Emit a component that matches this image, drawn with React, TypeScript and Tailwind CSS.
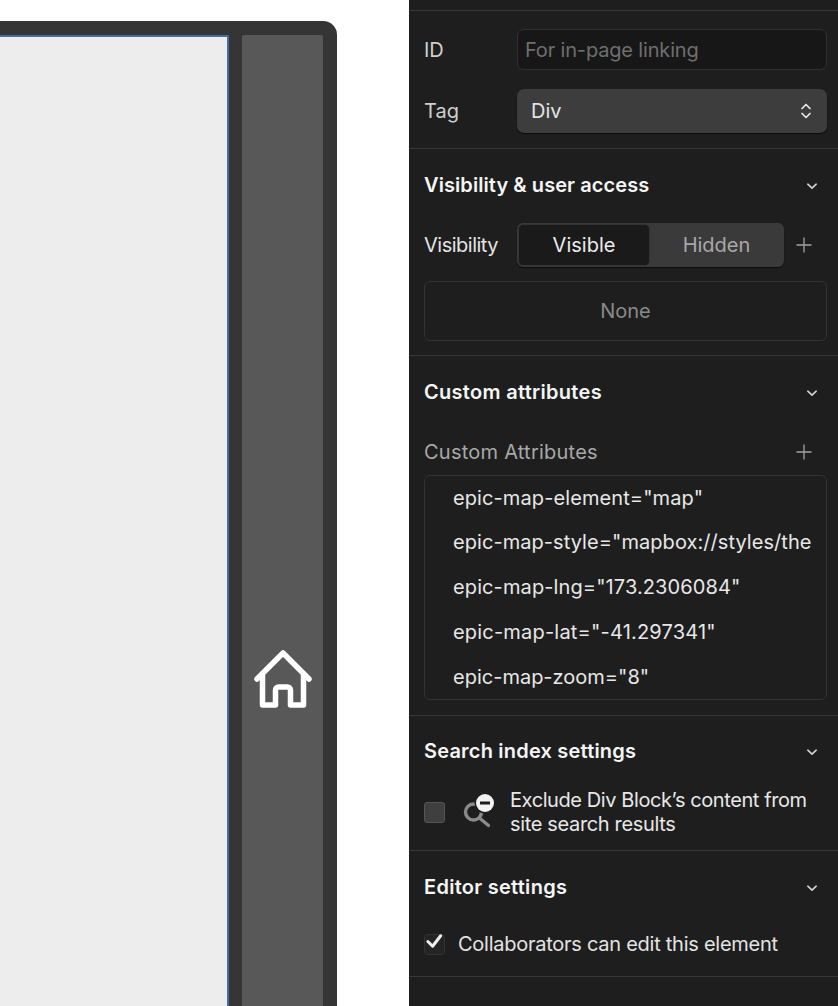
import React from "react";

const Chevron = () => (
  <svg className="translate-y-px" width="14" height="14" viewBox="0 0 14 14" fill="none" stroke="#d4d4d4" strokeWidth="1.6" strokeLinecap="round" strokeLinejoin="round">
    <path d="M2.8 5.2 7 9.2l4.2-4" />
  </svg>
);

const Plus = () => (
  <svg width="16" height="16" viewBox="0 0 16 16" fill="none" stroke="#a3a3a3" strokeWidth="1.3">
    <path d="M8 .5v15M.5 8h15" />
  </svg>
);

function Heading({ title, tracking }: { title: string; tracking: string }) {
  return (
    <div className="flex h-[20px] items-center justify-between pr-[8px]">
      <span className={`text-[20px] leading-[24px] font-semibold text-[#f5f5f5] ${tracking}`}>{title}</span>
      <Chevron />
    </div>
  );
}

export default function App() {
  const attrs = [
    { text: 'epic-map-element="map"', tracking: "tracking-[0.1px]" },
    { text: 'epic-map-style="mapbox://styles/the', tracking: "tracking-[0.06px]" },
    { text: 'epic-map-lng="173.2306084"', tracking: "tracking-[0.11px]" },
    { text: 'epic-map-lat="-41.297341"', tracking: "tracking-[0.2px]" },
    { text: 'epic-map-zoom="8"', tracking: "tracking-[0px]" },
  ];
  return (
    <div className="flex h-[1006px] w-[838px] overflow-hidden bg-white font-['Inter',sans-serif]">
      <div className="w-[409px] shrink-0 pt-[21px]">
        <div className="flex h-[985px] w-[337px] rounded-tr-[14px] bg-[#353535] pt-[14px]">
          <div className="w-[229px] rounded-tr-[2px] border-t-2 border-r-2 border-[#4a6aa3] bg-[#ededed]" />
          <div className="ml-[13px] flex w-[81px] justify-center rounded-t-[2px] bg-[#585858] pt-[614px]">
            <svg className="h-[62px] w-[62px]" viewBox="0 0 62 62" fill="none" stroke="#fff" strokeWidth="5.5" strokeLinecap="round" strokeLinejoin="round">
              <path d="M5 30 31 4l26 26" />
              <path d="M10.5 25v31h13V41a3 3 0 0 1 3-3h9a3 3 0 0 1 3 3v15h13V25" />
            </svg>
          </div>
        </div>
      </div>

      <div className="w-[429px] shrink-0 bg-[#1e1e1e] text-[20px] leading-[24px]">
        <div className="h-[11px] border-b border-[#373737]" />

        <div className="h-[138px] border-b border-[#373737] pl-[15px] pr-[11px] pt-[18px]">
          <div className="flex h-[41px] items-center">
            <span className="w-[93px] shrink-0 text-[#cfcfcf]">ID</span>
            <div className="flex h-[41px] w-[310px] shrink-0 items-center rounded-[7px] border border-[#303030] bg-[#171717] px-[7px] tracking-[-0.16px] text-[#6f6f6f]">For in-page linking</div>
          </div>
          <div className="mt-[19px] flex h-[44px] items-center">
            <span className="w-[93px] shrink-0 text-[#cfcfcf]">Tag</span>
            <div className="flex h-[44px] w-[310px] shrink-0 items-center justify-between rounded-[7px] bg-[#3d3d3d] pl-[14px] pr-[15px] text-[#e4e4e4] shadow-[0_1px_1px_#0c0c0c]">
              <span>Div</span>
              <svg width="12" height="18" viewBox="0 0 12 18" fill="none" stroke="#e8e8e8" strokeWidth="1.7" strokeLinecap="round" strokeLinejoin="round">
                <path d="M2 6.5 6 2.5l4 4M2 11.5l4 4 4-4" />
              </svg>
            </div>
          </div>
        </div>

        <div className="h-[207px] border-b border-[#373737] pl-[15px] pr-[11px] pt-[26px]">
          <Heading title="Visibility & user access" tracking="tracking-[0.08px]" />
          <div className="mt-[28px] flex h-[44px] items-center">
            <span className="w-[93px] shrink-0 tracking-[-0.5px] text-[#e4e4e4]">Visibility</span>
            <div className="flex h-[44px] w-[267px] shrink-0 rounded-[6px] bg-[#3a3a3a] p-px shadow-[0_1px_1px_#0c0c0c]">
              <div className="flex w-[132px] items-center justify-center rounded-[5px] border border-[#333] bg-[#1a1a1a] text-[#ececec]">Visible</div>
              <div className="flex flex-1 items-center justify-center text-[#a8a8a8]">Hidden</div>
            </div>
            <span className="ml-[12px]"><Plus /></span>
          </div>
          <div className="mt-[14px] flex h-[60px] w-[403px] items-center justify-center rounded-[6px] border border-[#333] text-[#8a8a8a]">None</div>
        </div>

        <div className="h-[360px] border-b border-[#373737] pl-[15px] pr-[11px] pt-[26px]">
          <Heading title="Custom attributes" tracking="tracking-[0.3px]" />
          <div className="mt-[38px] flex h-[24px] items-center justify-between pr-[15px]">
            <span className="tracking-[0.24px] text-[#a8a8a8]">Custom Attributes</span>
            <Plus />
          </div>
          <div className="mt-[11px] h-[225px] w-[403px] overflow-hidden rounded-[6px] border border-[#333] pl-[28px]">
            {attrs.map((a) => (
              <div key={a.text} className={`flex h-[45px] w-[358px] items-center whitespace-nowrap text-[#e8e8e8] first:h-[43px] ${a.tracking}`}>{a.text}</div>
            ))}
          </div>
        </div>

        <div className="h-[135px] border-b border-[#373737] pl-[15px] pr-[11px] pt-[25px]">
          <Heading title="Search index settings" tracking="tracking-[0.2px]" />
          <div className="mt-[27px] flex items-center">
            <div className="h-[21px] w-[21px] shrink-0 rounded-[3px] border border-[#555] bg-[#3f3f3f]" />
            <svg className="ml-[18px] shrink-0" width="32" height="36" viewBox="0 0 32 36" fill="none">
              <circle cx="10.5" cy="18" r="8" stroke="#8a8a8a" strokeWidth="3.4" />
              <path d="m17 24.5 8.5 7" stroke="#8a8a8a" strokeWidth="3.4" strokeLinecap="round" />
              <circle cx="22" cy="9" r="10.5" fill="#1e1e1e" />
              <circle cx="22" cy="9" r="9" fill="#f2f2f2" />
              <path d="M17 9h10" stroke="#1a1a1a" strokeWidth="3" />
            </svg>
            <div className="ml-[15px] w-[310px] tracking-[-0.35px] text-[#e8e8e8]">
              <span className="tracking-[-0.41px]">Exclude Div Block’s content from</span><br />site search results
            </div>
          </div>
        </div>

        <div className="h-[126px] border-b border-[#373737] pl-[15px] pr-[11px] pt-[26px]">
          <Heading title="Editor settings" tracking="tracking-[0.27px]" />
          <div className="mt-[35px] flex items-center">
            <div className="relative h-[21px] w-[21px] shrink-0 rounded-[4px] border border-[#333] bg-[#242424]">
              <svg className="absolute -top-[3px] left-0" width="19" height="19" viewBox="0 0 20 20" fill="none" stroke="#eeeeee" strokeWidth="3.2" strokeLinecap="round" strokeLinejoin="round">
                <path d="m3 10 5 5 8.5-11" />
              </svg>
            </div>
            <span className="ml-[13px] tracking-[-0.26px] text-[#e4e4e4]">Collaborators can edit this element</span>
          </div>
        </div>
      </div>
    </div>
  );
}
